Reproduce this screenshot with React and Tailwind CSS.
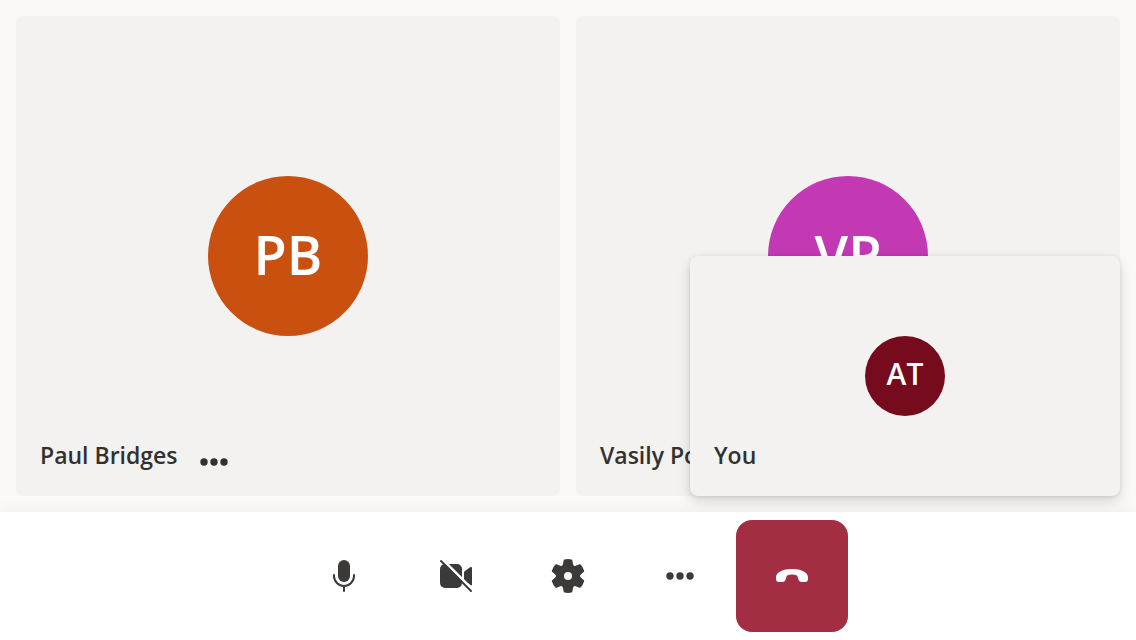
function Dots({ className }) {
  return (
    <svg viewBox="0 0 28 8" className={className} fill="currentColor" aria-hidden="true">
      <circle cx="4" cy="4" r="3.7" />
      <circle cx="14" cy="4" r="3.7" />
      <circle cx="24" cy="4" r="3.7" />
    </svg>
  );
}

function MicIcon() {
  return (
    <svg viewBox="0 0 40 40" className="size-10" fill="none" aria-hidden="true">
      <rect x="14" y="4" width="12" height="22" rx="6" fill="currentColor" />
      <path d="M10 19v1a10 10 0 0 0 20 0v-1M20 30v5" stroke="currentColor" strokeWidth="2" strokeLinecap="round" />
    </svg>
  );
}

function CameraOffIcon() {
  return (
    <svg viewBox="0 0 40 40" className="size-10" fill="none" aria-hidden="true">
      <rect x="4" y="8" width="22" height="24" rx="5" fill="currentColor" />
      <path d="M28 15.800 34 11.300Q36 10.200 36 12V28.500Q36 30.200 34.500 29L28 24.500z" fill="currentColor" />
      <path d="M6.500 3.500 37.500 34.500" stroke="#fff" strokeWidth="2.500" />
      <path d="M5 5 35 35" stroke="currentColor" strokeWidth="2" strokeLinecap="round" />
    </svg>
  );
}

function GearIcon() {
  return (
    <svg viewBox="0 0 20 20" className="size-10" fill="currentColor" aria-hidden="true">
      <path d="M1.910 7.380A8.500 8.500 0 0 1 3.690 4.300a.5.5 0 0 1 .54-.13l1.920.68a1 1 0 0 0 1.320-.76l.36-2a.5.5 0 0 1 .4-.4 8.530 8.530 0 0 1 3.550 0c.2.04.35.2.38.4l.37 2a1 1 0 0 0 1.320.76l1.920-.68a.5.5 0 0 1 .54.13 8.500 8.500 0 0 1 1.780 3.080c.06.2 0 .4-.15.54l-1.560 1.320a1 1 0 0 0 0 1.520l1.560 1.320a.5.5 0 0 1 .15.54 8.500 8.500 0 0 1-1.780 3.080.5.5 0 0 1-.54.13l-1.920-.68a1 1 0 0 0-1.320.76l-.37 2a.5.5 0 0 1-.38.4 8.530 8.530 0 0 1-3.560 0 .5.5 0 0 1-.39-.4l-.36-2a1 1 0 0 0-1.320-.76l-1.920.68a.5.5 0 0 1-.54-.13 8.500 8.500 0 0 1-1.780-3.080.5.5 0 0 1 .15-.54l1.560-1.320a1 1 0 0 0 0-1.520L2.060 7.920a.5.5 0 0 1-.15-.54ZM8 10a2 2 0 1 0 4 0 2 2 0 0 0-4 0Z" />
    </svg>
  );
}

function HangUpIcon() {
  return (
    <svg viewBox="0 0 40 40" className="size-10" fill="currentColor" aria-hidden="true">
      <path d="M20 13C11 13 4 16 4 21.500V23Q4 26 7 26H10Q12.800 26 13.600 23.500L14.500 20.500Q15 18.500 20 18.500Q25 18.500 25.500 20.500L26.400 23.500Q27.200 26 30 26H33Q36 26 36 23V21.500C36 16 29 13 20 13Z" />
    </svg>
  );
}

function Participant({ name, initials, color }) {
  return (
    <article className="flex min-w-0 flex-1 flex-col rounded-lg bg-[#f3f2f1] p-4">
      <div className="flex flex-1 items-center justify-center pt-12">
        <div className={"flex size-40 items-center justify-center rounded-full pb-1 text-[54px] leading-none font-semibold text-white " + color}>
          {initials}
        </div>
      </div>
      <div className="flex h-12 items-center gap-[22px] px-2">
        <h2 className="pb-0.5 text-[23px] leading-8 font-semibold whitespace-nowrap">{name}</h2>
        <button type="button" aria-label={"More options for " + name} className="pt-3">
          <Dots className="h-2 w-7" />
        </button>
      </div>
    </article>
  );
}

function ControlButton({ label, danger, children }) {
  return (
    <button
      type="button"
      aria-label={label}
      className={"flex size-28 items-center justify-center rounded-2xl " + (danger ? "bg-[#a32d42] text-white" : "bg-white text-[#3b3a39]")}
    >
      {children}
    </button>
  );
}

export default function App() {
  return (
    <div className="flex min-h-screen flex-col bg-[#faf9f8] font-['Open_Sans','Noto_Sans',sans-serif] text-[#323130]">
      <main className="relative flex flex-1 gap-4 p-4">
        <Participant name="Paul Bridges" initials="PB" color="bg-[#ca5010]" />
        <Participant name="Vasily Podkolzin" initials="VP" color="bg-[#c239b3]" />
        <section
          aria-label="Your video"
          className="absolute right-4 bottom-4 flex h-60 w-[430px] flex-col rounded-lg bg-[#f3f2f1] p-4 shadow-[0_6px_14px_rgba(0,0,0,0.13),0_1px_4px_rgba(0,0,0,0.11)]"
        >
          <div className="flex flex-1 items-center justify-center pt-12">
            <div className="flex size-20 items-center justify-center rounded-full bg-[#750b1c] pb-1 text-[30px] leading-none font-semibold text-white">
              AT
            </div>
          </div>
          <h2 className="flex h-12 items-center px-2 pb-0.5 text-[23px] leading-8 font-semibold">You</h2>
        </section>
      </main>
      <footer className="relative flex justify-center bg-white p-2 shadow-[0_0_16px_rgba(0,0,0,0.05)]">
        <ControlButton label="Mute"><MicIcon /></ControlButton>
        <ControlButton label="Turn camera on"><CameraOffIcon /></ControlButton>
        <ControlButton label="Settings"><GearIcon /></ControlButton>
        <ControlButton label="More options"><Dots className="h-2 w-7" /></ControlButton>
        <ControlButton label="Leave call" danger><HangUpIcon /></ControlButton>
      </footer>
    </div>
  );
}
